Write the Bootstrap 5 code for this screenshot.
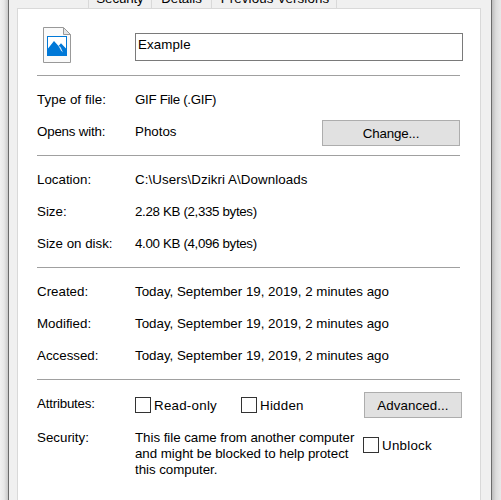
<!DOCTYPE html>
<html lang="en">
<head>
<meta charset="utf-8">
<title>Example Properties</title>
<link href="https://cdn.jsdelivr.net/npm/bootstrap@5.3.0/dist/css/bootstrap.min.css" rel="stylesheet">
<style>
body{width:501px;height:500px;background:#e9e9e9;font-family:"Liberation Sans",Arial,sans-serif;font-size:13.33px;line-height:16px;color:#000;white-space:nowrap}
.edge-l{width:8px;background:linear-gradient(90deg,#f1f1f1,#e8e8e8 50%,#c9c9c9)}
.edge-r{width:9px;background:linear-gradient(90deg,#bdbdbd,#dcdcdc 45%,#e9e9e9)}
.dialog{width:484px;background:#f0f0f0;border:solid #6b6b6b;border-width:0 1px;padding:0 10px 0 8px}
.tabs{height:8px;padding-left:71px}
.tab-cell{height:8px;border-right:1px solid #d9d9d9;line-height:16px;text-align:center}
.tab-cell span{display:block;margin-top:-9px}
.tab-a{width:64px;border-left:1px solid #d9d9d9;letter-spacing:-.1px}.tab-b{width:60px}.tab-c{width:125px;letter-spacing:.1px;padding-left:2px}
.sheet{width:464px;height:492px;background:#fff;border:1px solid #d9d9d9;border-bottom:0;padding-left:19px}
.head{height:66px;padding-top:18px}
.file-icon{width:30px;height:38px;margin-left:5px}
.name-box{width:328px;height:28px;margin:6px 0 0 63px;border:1px solid #7a7a7a;border-radius:0;padding:3px 2px;font-size:inherit;line-height:16px;color:#000;letter-spacing:.12px}
.group{width:423px;border-top:1px solid #a0a0a0;padding:8px 0 7px}
.line{height:32px;padding-top:8px}
.label-col{width:98px}
.push{width:138px;height:26px;margin-top:-4px;padding:0;border:1px solid #adadad;border-radius:0;background:#e1e1e1;font-size:13.33px;line-height:25px;color:#000;letter-spacing:-.15px}
.push.adv{width:98px;margin:-4px -2px 0 0;letter-spacing:.08px}
.attrs{height:38px;padding-top:8px}
.tick{margin:0!important;width:16px;height:16px;border:1px solid #333!important;border-radius:0!important;flex:none;background:#fff}
.chk{gap:3px;margin-top:1px;letter-spacing:.25px}
.chk span{padding-top:1px;margin-bottom:-1px}
.chk.low{margin-top:7px}
.readonly{width:106px}
.note{width:228px;line-height:16px;letter-spacing:-.04px}
.sp-type{letter-spacing:.06px}.sp-gif{letter-spacing:-.32px}.sp-opens{letter-spacing:-.2px}
.sp-path{letter-spacing:.08px}.sp-size{letter-spacing:-.34px}.sp-attr{letter-spacing:-.2px}
</style>
<script src="https://cdn.jsdelivr.net/npm/bootstrap@5.3.0/dist/js/bootstrap.bundle.min.js"></script>
</head>
<body class="d-flex overflow-hidden">
<div class="edge-l"></div>
<main class="dialog flex-shrink-0">
  <div class="tabs d-flex overflow-hidden">
    <div class="tab-cell tab-a"><span>Security</span></div><div class="tab-cell tab-b"><span>Details</span></div><div class="tab-cell tab-c"><span>Previous Versions</span></div>
  </div>
  <section class="sheet">
    <div class="head d-flex">
      <svg class="file-icon" viewBox="0 0 30 38" aria-hidden="true">
        <path d="M1.5.5H21L28.500 8V35.500H1.500Z" fill="#fafafa" stroke="#999"/>
        <path d="M21.500.5V7.500H28.500Z" fill="#e5e5e5" stroke="#999"/>
        <path d="M5 9H25V29H5Z" fill="#0078d7"/>
        <path d="M6 10H24V21.500L19 16.300L16.500 19L12 14L6 21.500Z" fill="#fff"/>
        <path d="M16.200 18.500L18.500 20L21 25.500L19 23.500Z" fill="#d8ebfa"/>
      </svg>
      <div class="name-box form-control">Example</div>
    </div>
    <div class="group">
      <div class="line d-flex"><div class="label-col sp-type">Type of file:</div><div class="sp-gif">GIF File (.GIF)</div></div>
      <div class="line d-flex"><div class="label-col sp-opens">Opens with:</div><div>Photos</div><button class="btn push ms-auto">Change...</button></div>
    </div>
    <div class="group">
      <div class="line d-flex"><div class="label-col">Location:</div><div class="sp-path">C:\Users\Dzikri A\Downloads</div></div>
      <div class="line d-flex"><div class="label-col">Size:</div><div class="sp-size">2.28 KB (2,335 bytes)</div></div>
      <div class="line d-flex"><div class="label-col">Size on disk:</div><div class="sp-size">4.00 KB (4,096 bytes)</div></div>
    </div>
    <div class="group">
      <div class="line d-flex"><div class="label-col">Created:</div><div>Today, September 19, 2019, 2 minutes ago</div></div>
      <div class="line d-flex"><div class="label-col">Modified:</div><div>Today, September 19, 2019, 2 minutes ago</div></div>
      <div class="line d-flex"><div class="label-col">Accessed:</div><div>Today, September 19, 2019, 2 minutes ago</div></div>
    </div>
    <div class="group">
      <div class="attrs d-flex align-items-start"><div class="label-col sp-attr">Attributes:</div>
        <label class="chk readonly d-flex"><input class="form-check-input tick" type="checkbox"><span>Read-only</span></label>
        <label class="chk d-flex"><input class="form-check-input tick" type="checkbox"><span>Hidden</span></label>
        <button class="btn push adv ms-auto">Advanced...</button></div>
      <div class="d-flex pt-1 align-items-start"><div class="label-col">Security:</div>
        <div class="note">This file came from another computer<br>and might be blocked to help protect<br>this computer.</div>
        <label class="chk low d-flex"><input class="form-check-input tick" type="checkbox"><span>Unblock</span></label></div>
    </div>
  </section>
</main>
<div class="edge-r flex-shrink-0"></div>
</body>
</html>
